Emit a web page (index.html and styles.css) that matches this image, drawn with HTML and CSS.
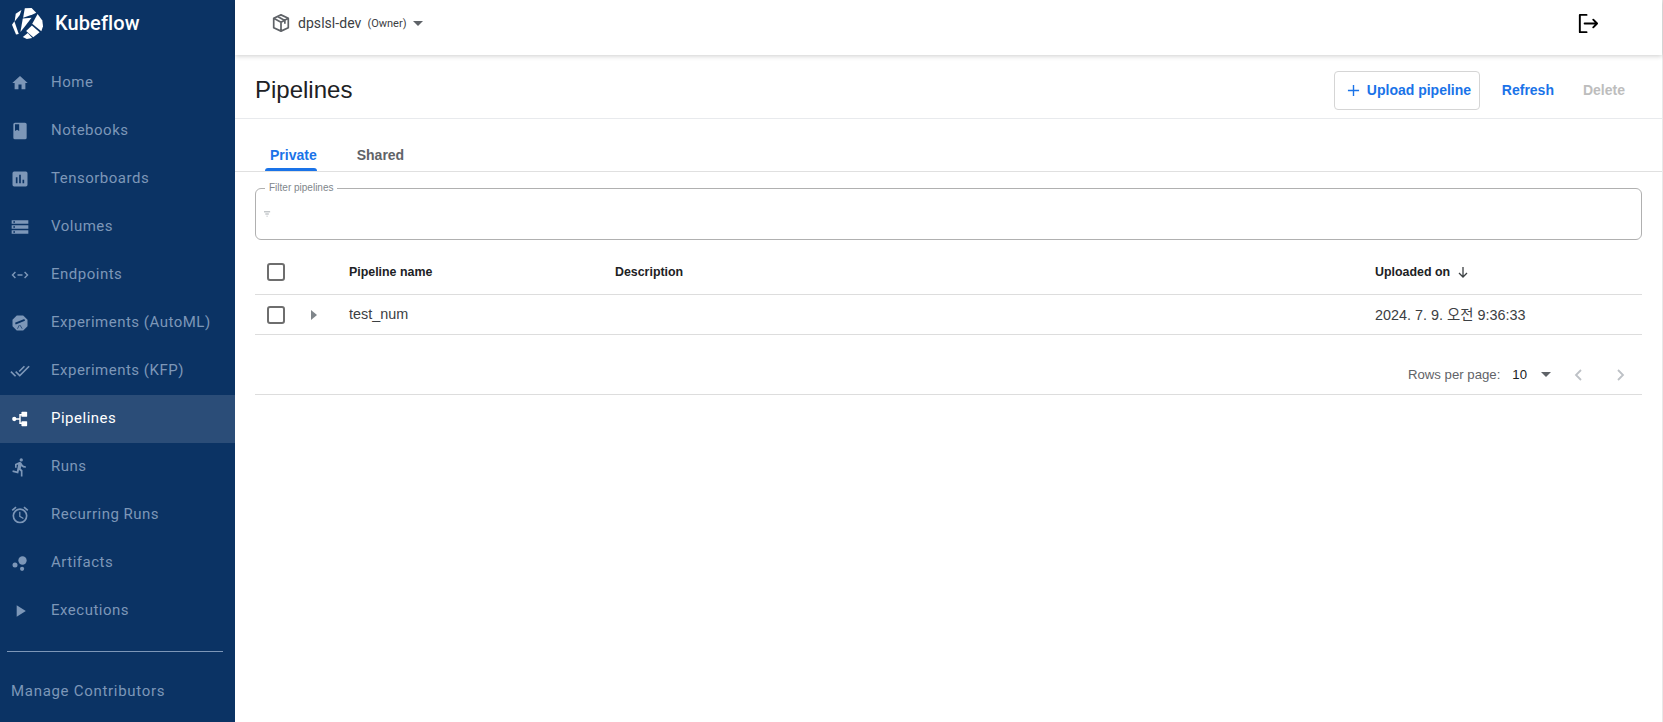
FILE: index.html
```html
<!DOCTYPE html>
<html lang="en">
<head>
<meta charset="utf-8">
<title>Pipelines</title>
<link rel="stylesheet" href="styles.css">
</head>
<body>
<div class="app">
  <aside class="sidebar">
    <div class="brand">
      <svg class="logo" viewBox="36 24 92 92"><g fill="#fff"><path d="M47 41l17-11-5 15-15 19z"/><path d="M74 25l20-1 14 14-11 5-28 10z"/><path d="M112 42l14 19 2 17-5 15-27-22z"/><path d="M68 55l26-2-17 22-16 20z"/><path d="M95 76l23 20-19 15-21-19z"/><path d="M36 74l7-11 13 38-8 2z"/><path d="M68 110l15-12 13 15-16 3z"/></g></svg>
      <span class="brand-name">Kubeflow</span>
    </div>
    <nav class="nav">
      <a class="nav-item"><svg class="ico" viewBox="-1 -1 26 26"><path d="M10 20v-6h4v6h5v-8h3L12 3 2 12h3v8z"/></svg><span>Home</span></a>
      <a class="nav-item"><svg class="ico" viewBox="0 0 24 24"><path d="M18 2H6a2 2 0 0 0-2 2v16a2 2 0 0 0 2 2h12a2 2 0 0 0 2-2V4a2 2 0 0 0-2-2zM6 4h5v8l-2.500-1.500L6 12z"/></svg><span>Notebooks</span></a>
      <a class="nav-item"><svg class="ico" viewBox="0 0 24 24"><path d="M19 3H5a2 2 0 0 0-2 2v14a2 2 0 0 0 2 2h14a2 2 0 0 0 2-2V5a2 2 0 0 0-2-2zM9 17H7v-7h2zm4 0h-2V7h2zm4 0h-2v-4h2z"/></svg><span>Tensorboards</span></a>
      <a class="nav-item"><svg class="ico" viewBox="0 0 24 24"><path d="M2 20h20v-4H2zm2-3h2v2H4zM2 4v4h20V4zm4 3H4V5h2zm-4 7h20v-4H2zm2-3h2v2H4z"/></svg><span>Volumes</span></a>
      <a class="nav-item"><svg class="ico ico-line" viewBox="0 0 24 24"><path d="M6.500 8.500L3 12l3.500 3.500M17.500 8.500L21 12l-3.500 3.500M9 12h6"/></svg><span>Endpoints</span></a>
      <a class="nav-item"><svg class="ico" viewBox="-2 -2 28 28"><path d="M7.500 1.500h9l6 6v9l-6 6h-9l-6-6v-9z"/><path d="M5 11.500l13-5 1 2.500-13 5z" class="ico-cut"/><path d="M11 15l-2.500 5M12 15l3 5" class="ico-cut-line"/></svg><span>Experiments (AutoML)</span></a>
      <a class="nav-item"><svg class="ico" viewBox="0 0 24 24"><path d="M18 7l-1.400-1.400-6.300 6.300 1.400 1.400zm4.200-1.400L11.700 16.200 7.500 12l-1.400 1.400 5.600 5.600 12-12zM.4 13.400L6 19l1.400-1.400L1.800 12z"/></svg><span>Experiments (KFP)</span></a>
      <a class="nav-item is-active"><svg class="ico" viewBox="-2 -2 28 28"><circle cx="4" cy="12" r="3"/><path d="M4 11h7V5h4v2h-2v10h2v2h-4v-6H4z"/><rect x="14" y="2" width="8" height="7" rx="1"/><rect x="14" y="15" width="8" height="7" rx="1"/></svg><span>Pipelines</span></a>
      <a class="nav-item"><svg class="ico" viewBox="0 0 24 24"><path d="M13.500 5.500a2 2 0 1 0 0-4 2 2 0 0 0 0 4zM9.900 19.900l1-4.400 2.100 2v6h2v-7.500l-2.100-2 .6-3A7.300 7.300 0 0 0 19 13v-2c-1.900 0-3.500-1-4.300-2.400l-1-1.600c-.4-.6-1-1-1.700-1-.3 0-.5.100-.8.100L6 8.300V13h2V9.600l1.800-.7-1.600 8.100-4.900-1-.4 2z"/></svg><span>Runs</span></a>
      <a class="nav-item"><svg class="ico" viewBox="0 0 24 24"><path d="M22 5.700l-4.600-3.900-1.300 1.500 4.600 3.900zM7.900 3.400L6.600 1.900 2 5.700l1.300 1.500zM12.500 8H11v6l4.700 2.900.8-1.200-4-2.400zM12 4a9 9 0 1 0 .001 18.001A9 9 0 0 0 12 4zm0 16a7 7 0 1 1 0-14 7 7 0 0 1 0 14z"/></svg><span>Recurring Runs</span></a>
      <a class="nav-item"><svg class="ico" viewBox="0 0 24 24"><circle cx="6" cy="14.500" r="3"/><circle cx="15" cy="9" r="5"/><circle cx="14.500" cy="19" r="2.500"/></svg><span>Artifacts</span></a>
      <a class="nav-item"><svg class="ico" viewBox="0 0 24 24"><path d="M8 5v14l11-7z"/></svg><span>Executions</span></a>
    </nav>
    <div class="side-rule"></div>
    <a class="contrib">Manage Contributors</a>
  </aside>

  <main class="main">
    <header class="topbar">
      <div class="ns">
        <svg class="cube" viewBox="2 1.500 20 21"><path d="M12 2.500l8.500 4v11L12 21.500l-8.500-4v-11zM3.500 6.500L12 11l8.500-4.500M12 11v10.500M8 4.500l8.500 4.500v4" fill="none" stroke="#5f6368" stroke-width="2" stroke-linejoin="round"/></svg>
        <span class="ns-name">dpslsl-dev</span>
        <span class="ns-role">(Owner)</span>
        <span class="caret"></span>
      </div>
      <svg class="logout" viewBox="0 0 24 24"><path d="M11 3H4v18h7M9 12h13M18 8l4 4-4 4" fill="none" stroke="#000" stroke-width="2" stroke-linecap="round" stroke-linejoin="round"/></svg>
    </header>

    <section class="titlebar">
      <h1 class="title">Pipelines</h1>
      <div class="actions">
        <button class="btn btn-upload"><svg class="plus" viewBox="0 0 14 14"><path d="M7 1v12M1 7h12" stroke="#1a73e8" stroke-width="1.500"/></svg>Upload pipeline</button>
        <button class="btn btn-refresh">Refresh</button>
        <button class="btn btn-delete">Delete</button>
      </div>
    </section>

    <div class="tabs">
      <div class="tab is-current">Private</div>
      <div class="tab">Shared</div>
    </div>

    <div class="content">
      <fieldset class="filter">
        <legend class="filter-label">Filter pipelines</legend>
        <svg class="filter-ico" viewBox="0 0 8 6"><path d="M0 .5h7M1.500 3h4M3 5.500h1" stroke="#9aa0a6" stroke-width="1"/></svg>
      </fieldset>

      <div class="row row-head">
        <div class="cell-check"><span class="check"></span></div>
        <div class="cell-expand"></div>
        <div class="cell-name">Pipeline name</div>
        <div class="cell-desc">Description</div>
        <div class="cell-date">Uploaded on <svg class="sort" viewBox="0 0 12 12"><path d="M6 1v10M2 7l4 4 4-4" fill="none" stroke="#3c4043" stroke-width="1.300"/></svg></div>
      </div>
      <div class="row row-body">
        <div class="cell-check"><span class="check"></span></div>
        <div class="cell-expand"><span class="expander"></span></div>
        <div class="cell-name">test_num</div>
        <div class="cell-desc"></div>
        <div class="cell-date">2024. 7. 9. 오전 9:36:33</div>
      </div>
      <div class="pager">
        <span class="pager-label">Rows per page:</span>
        <span class="pager-value">10</span>
        <span class="pager-caret"></span>
        <svg class="chev" viewBox="0 0 10 14"><path d="M8 2L3 7l5 5" fill="none" stroke="#bdc1c6" stroke-width="1.800"/></svg>
        <svg class="chev" viewBox="0 0 10 14"><path d="M2 2l5 5-5 5" fill="none" stroke="#bdc1c6" stroke-width="1.800"/></svg>
      </div>
    </div>
  </main>
</div>
</body>
</html>
```
FILE: styles.css
```css
* { box-sizing: border-box; }
html, body { margin: 0; height: 100%; overflow: hidden; background: #fff; }
body { font-family: "Liberation Sans", Arial, sans-serif; color: #202124; }
.app { display: flex; height: 722px; }

.sidebar { width: 235px; flex: none; background: #0b3364; display: flex; flex-direction: column; }
.brand { height: 59px; padding: 8px 0 0 12px; display: flex; align-items: flex-start; }
.logo { width: 31px; height: 31px; }
.brand-name { font: 500 20px/31px Roboto, sans-serif; color: #fff; margin-left: 12px; letter-spacing: .1px; }
.nav { display: flex; flex-direction: column; }
.nav-item { height: 48px; display: flex; align-items: center; padding-left: 10px; color: #7d97b8; font: 400 15px Roboto, sans-serif; letter-spacing: .5px; }
.nav-item span { margin: 0 0 2px 21px; }
.ico { width: 20px; height: 20px; fill: #7d97b8; flex: none; }
.ico-line { fill: none; stroke: #7d97b8; stroke-width: 1.700; }
.ico-cut { fill: #0b3364; }
.ico-cut-line { fill: none; stroke: #0b3364; stroke-width: 1; }
.is-active { background: #2b4d78; color: #fff; }
.is-active .ico { fill: #fff; }
.side-rule { height: 1px; margin: 16px 12px 0 7px; background: #7d97b8; }
.contrib { margin: 29px 0 0 11px; color: #7d97b8; font: 400 15px/20px Roboto, sans-serif; letter-spacing: .7px; }

.main { flex: 1; min-width: 0; border-right: 1px solid #e8e8e8; display: flex; flex-direction: column; }
.topbar { height: 55px; flex: none; display: flex; align-items: flex-start; justify-content: space-between; padding: 13px 63px 0 37px; box-shadow: 0 1px 5px rgba(0,0,0,.2); position: relative; }
.ns { display: flex; align-items: center; height: 20px; }
.cube { width: 18px; height: 18px; }
.ns-name { font-size: 14px; color: #3c4043; margin-left: 8px; font-family: Roboto, sans-serif; letter-spacing: .05px; }
.ns-role { font-size: 11px; color: #3c4043; margin-left: 6px; font-family: Roboto, sans-serif; }
.caret { margin-left: 7px; border: 5px solid transparent; border-top-color: #5f6368; border-bottom: 0; }
.logout { width: 23px; height: 23px; margin-top: -1px; }

.titlebar { height: 64px; flex: none; display: flex; align-items: center; justify-content: space-between; padding: 7px 37px 0 20px; border-bottom: 1px solid #e8eaed; }
.title { margin: 0; font: 400 24px "Liberation Sans", Arial, sans-serif; color: #202124; }
.actions { display: flex; align-items: center; }
.btn { background: none; border: 0; font: 700 14px "Liberation Sans", Arial, sans-serif; color: #1a73e8; height: 39px; padding: 0; white-space: nowrap; }
.btn-upload { border: 1px solid #d5d5d5; border-radius: 4px; width: 146px; padding: 0 0 0 12px; display: flex; align-items: center; }
.plus { width: 13px; height: 13px; margin-right: 7px; }
.btn-refresh { margin-left: 22px; }
.btn-delete { margin-left: 29px; color: #bdbdbd; }

.tabs { height: 53px; flex: none; display: flex; padding: 22px 0 0 30px; border-bottom: 1px solid #e0e0e0; }
.tab { font: 700 14px/28px "Liberation Sans", Arial, sans-serif; color: #5f6368; height: 30px; position: relative; margin-left: 40px; }
.is-current { color: #1a73e8; margin-left: 5px; }
.is-current::after { content: ""; position: absolute; left: -5px; right: 0; bottom: 0; height: 3px; background: #1a73e8; border-radius: 3px 3px 0 0; }

.content { padding: 0 20px; }
.filter { margin: 10px 0 0; padding: 0 0 0 8px; height: 58px; border: 1px solid #b0b0b0; border-radius: 6px; position: relative; }
.filter-label { font-size: 10px; color: #80868b; padding: 0 4px; margin-left: 1px; line-height: 12px; }
.filter-ico { position: absolute; left: 8px; top: 17px; width: 7px; height: 6px; }

.row { display: flex; align-items: center; border-bottom: 1px solid #ddd; }
.row-head { height: 55px; padding-top: 10px; font-size: 12.4px; font-weight: 700; color: #202124; }
.row-body { height: 40px; font-size: 14.4px; color: #3c4043; }
.row-body .cell-name { padding-bottom: 2px; }
.row-body .cell-date { padding-bottom: 3px; }
.cell-check { width: 22px; margin-left: 12px; flex: none; display: flex; }
.check { width: 18px; height: 18px; border: 2px solid #6e6e6e; border-radius: 3px; }
.cell-expand { width: 60px; flex: none; padding-left: 22px; display: flex; }
.expander { border: 5px solid transparent; border-left: 6px solid #80868b; border-right: 0; }
.cell-name { width: 266px; flex: none; }
.cell-desc { width: 760px; flex: none; }
.cell-date { flex: 1; font-family: "Liberation Sans", "Noto Sans CJK KR", sans-serif; display: flex; align-items: center; gap: 7px; }
.sort { width: 12px; height: 12px; }

.pager { height: 60px; display: flex; align-items: center; justify-content: flex-end; padding: 20px 16px 0 0; border-bottom: 1px solid #ddd; font-size: 13.200px; color: #5f6368; }
.pager-value { color: #202124; margin-left: 12px; }
.pager-caret { margin-left: 14px; border: 5px solid transparent; border-top-color: #5f6368; border-bottom: 0; }
.chev { width: 10px; height: 14px; margin-left: 22px; }
.chev:last-child { margin-left: 33px; }
```
